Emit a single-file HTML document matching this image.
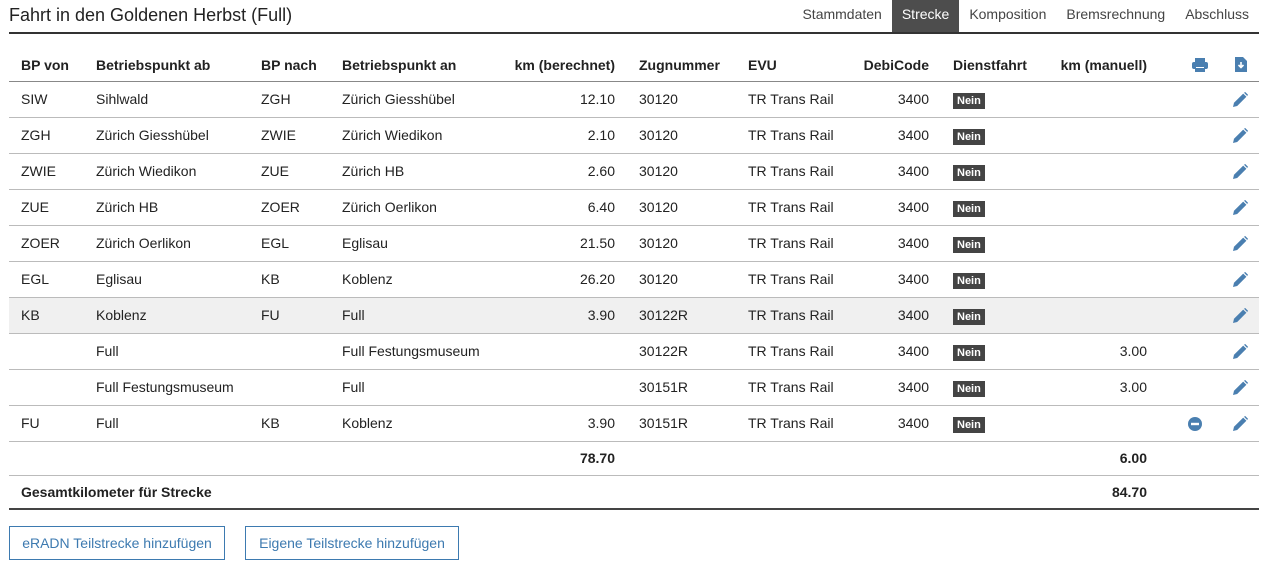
<!DOCTYPE html>
<html><head><meta charset="utf-8"><style>
*{box-sizing:border-box}
body{margin:0;width:1271px;height:569px;background:#fff;font-family:"Liberation Sans",Arial,sans-serif;font-size:14px;color:#222;position:relative;overflow:hidden}
.title{position:absolute;left:9px;top:5px;font-size:18px;color:#222}
.tabs{position:absolute;top:0;right:12px;height:33px;display:flex}
.tabs div{padding:0 10px;line-height:28px;height:33px;color:#444;font-size:14px}
.tabs div.a{background:#4d4d4d;color:#fff}
.hl{position:absolute;left:9px;top:32px;width:1250px;height:2px;background:#333}
table{position:absolute;left:9px;top:34px;width:1250px;border-collapse:collapse;table-layout:fixed}
td,th{padding:0 12px;height:36px;white-space:nowrap;overflow:visible;border-bottom:1px solid #bbb;text-align:left}
th{height:47px;padding-top:15px;font-weight:bold;border-bottom:1px solid #888}
.r{text-align:right}
.c{text-align:center;padding:0}
th.c{padding-top:15px}
.b{background:#444;color:#fff;font-weight:bold;font-size:11px;padding:2px 4px}
tr.g td{background:#f0f0f0}
tr.t td{height:34px;font-weight:bold}
tr.last td{border-bottom:2px solid #444}
.btn{position:absolute;top:526px;height:34px;border:1px solid #3d7ab0;color:#3d7ab0;font-size:14px;line-height:32px;text-align:center}
svg{vertical-align:middle}
th svg{vertical-align:-2px}
</style></head><body>
<div class="title">Fahrt in den Goldenen Herbst (Full)</div>
<div class="tabs"><div>Stammdaten</div><div class="a">Strecke</div><div>Komposition</div><div>Bremsrechnung</div><div>Abschluss</div></div>
<div class="hl"></div>
<table>
<colgroup><col style="width:75px"><col style="width:165px"><col style="width:81px"><col style="width:180px"><col style="width:117px"><col style="width:109px"><col style="width:112px"><col style="width:93px"><col style="width:105px"><col style="width:113px"><col style="width:63px"><col style="width:37px"></colgroup>
<tr><th>BP von</th><th>Betriebspunkt ab</th><th>BP nach</th><th>Betriebspunkt an</th><th class="r" style="padding-left:0">km (berechnet)</th><th>Zugnummer</th><th>EVU</th><th class="r">DebiCode</th><th>Dienstfahrt</th><th class="r">km (manuell)</th><th class="r" style="padding-right:14px"><svg width="16" height="14" viewBox="0 0 16 14"><rect x="3" y="0" width="10" height="4" fill="#4a7fb0"/><rect x="0" y="4" width="16" height="7" rx="2" fill="#4a7fb0"/><rect x="3" y="8" width="10" height="6" fill="#4a7fb0"/><rect x="4" y="9" width="8" height="1" fill="#fff"/></svg></th><th class="c"><svg width="12" height="15" viewBox="0 0 12 15"><path d="M0 0h8l4 4v11H0z" fill="#4a7fb0"/><path d="M6 5v5M3.5 8L6 10.5 8.5 8" stroke="#fff" stroke-width="1.6" fill="none"/></svg></th></tr>
<tr><td>SIW</td><td>Sihlwald</td><td>ZGH</td><td>Zürich Giesshübel</td><td class="r">12.10</td><td>30120</td><td>TR Trans Rail</td><td class="r">3400</td><td><span class="b">Nein</span></td><td></td><td></td><td class="c">P</td></tr>
<tr><td>ZGH</td><td>Zürich Giesshübel</td><td>ZWIE</td><td>Zürich Wiedikon</td><td class="r">2.10</td><td>30120</td><td>TR Trans Rail</td><td class="r">3400</td><td><span class="b">Nein</span></td><td></td><td></td><td class="c">P</td></tr>
<tr><td>ZWIE</td><td>Zürich Wiedikon</td><td>ZUE</td><td>Zürich HB</td><td class="r">2.60</td><td>30120</td><td>TR Trans Rail</td><td class="r">3400</td><td><span class="b">Nein</span></td><td></td><td></td><td class="c">P</td></tr>
<tr><td>ZUE</td><td>Zürich HB</td><td>ZOER</td><td>Zürich Oerlikon</td><td class="r">6.40</td><td>30120</td><td>TR Trans Rail</td><td class="r">3400</td><td><span class="b">Nein</span></td><td></td><td></td><td class="c">P</td></tr>
<tr><td>ZOER</td><td>Zürich Oerlikon</td><td>EGL</td><td>Eglisau</td><td class="r">21.50</td><td>30120</td><td>TR Trans Rail</td><td class="r">3400</td><td><span class="b">Nein</span></td><td></td><td></td><td class="c">P</td></tr>
<tr><td>EGL</td><td>Eglisau</td><td>KB</td><td>Koblenz</td><td class="r">26.20</td><td>30120</td><td>TR Trans Rail</td><td class="r">3400</td><td><span class="b">Nein</span></td><td></td><td></td><td class="c">P</td></tr>
<tr class="g"><td>KB</td><td>Koblenz</td><td>FU</td><td>Full</td><td class="r">3.90</td><td>30122R</td><td>TR Trans Rail</td><td class="r">3400</td><td><span class="b">Nein</span></td><td></td><td></td><td class="c">P</td></tr>
<tr><td></td><td>Full</td><td></td><td>Full Festungsmuseum</td><td></td><td>30122R</td><td>TR Trans Rail</td><td class="r">3400</td><td><span class="b">Nein</span></td><td class="r">3.00</td><td></td><td class="c">P</td></tr>
<tr><td></td><td>Full Festungsmuseum</td><td></td><td>Full</td><td></td><td>30151R</td><td>TR Trans Rail</td><td class="r">3400</td><td><span class="b">Nein</span></td><td class="r">3.00</td><td></td><td class="c">P</td></tr>
<tr><td>FU</td><td>Full</td><td>KB</td><td>Koblenz</td><td class="r">3.90</td><td>30151R</td><td>TR Trans Rail</td><td class="r">3400</td><td><span class="b">Nein</span></td><td></td><td class="r" style="padding-right:20px"><svg width="14" height="14" viewBox="0 0 14 14"><circle cx="7" cy="7" r="7" fill="#4a7fb0"/><rect x="3" y="5.8" width="8" height="2.4" fill="#fff"/></svg></td><td class="c">P</td></tr>
<tr class="t"><td></td><td></td><td></td><td></td><td class="r">78.70</td><td></td><td></td><td></td><td></td><td class="r">6.00</td><td></td><td></td></tr>
<tr class="t last"><td colspan="4">Gesamtkilometer für Strecke</td><td></td><td></td><td></td><td></td><td></td><td class="r">84.70</td><td></td><td></td></tr>
</table>
<div class="btn" style="left:9px;width:216px">eRADN Teilstrecke hinzufügen</div>
<div class="btn" style="left:245px;width:214px">Eigene Teilstrecke hinzufügen</div>
<script>
document.querySelectorAll('td.c').forEach(function(td){if(td.textContent==='P'){td.innerHTML='<svg width="15" height="15" viewBox="0 0 15 15"><path d="M0 15l1-4.2L10.2 1.6l3.2 3.2L4.2 14z" fill="#4a7fb0"/><path d="M11 .8l1.2-.8 2.8 2.8-.8 1.2z" fill="#4a7fb0"/></svg>';}});
</script>
</body></html>
